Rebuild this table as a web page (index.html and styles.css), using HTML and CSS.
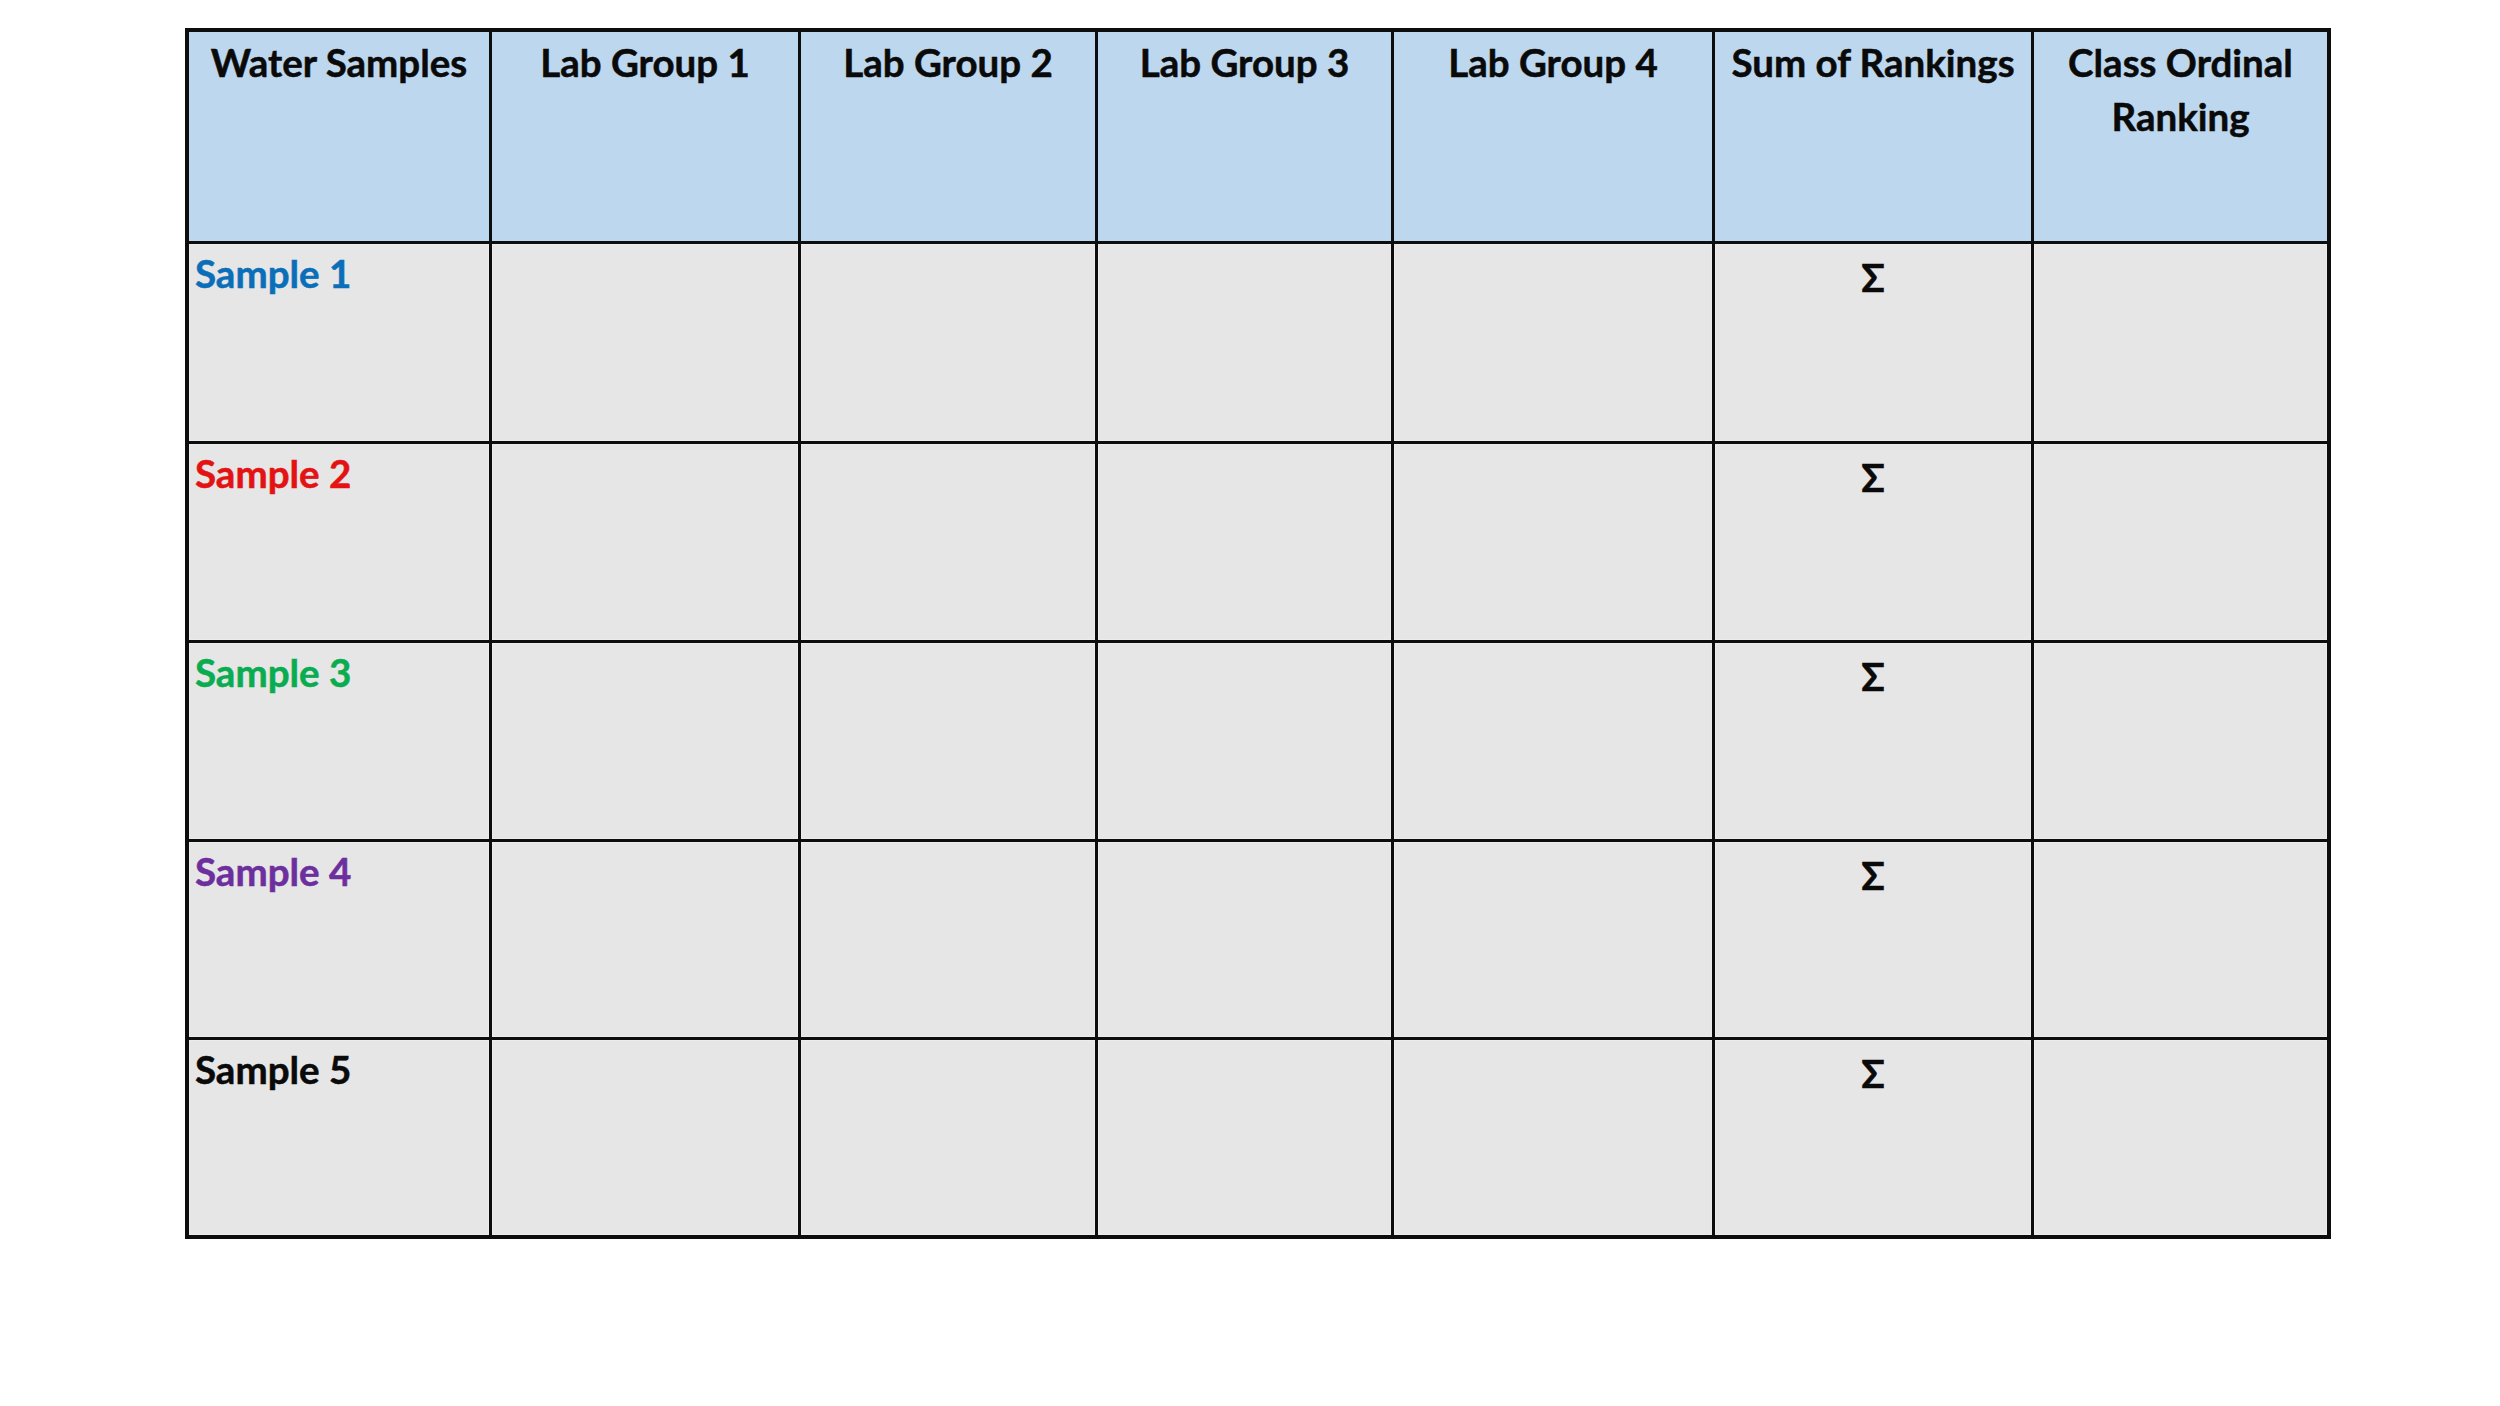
FILE: index.html
```html
<!DOCTYPE html>
<html>
<head>
<meta charset="utf-8">
<link rel="stylesheet" href="styles.css">
</head>
<body>
<div class="sheet">
  <div class="grid">
    <div class="cell head">Water Samples</div>
    <div class="cell head">Lab Group 1</div>
    <div class="cell head">Lab Group 2</div>
    <div class="cell head">Lab Group 3</div>
    <div class="cell head">Lab Group 4</div>
    <div class="cell head">Sum of Rankings</div>
    <div class="cell head">Class Ordinal<br>Ranking</div>

    <div class="cell label s1">Sample 1</div>
    <div class="cell"></div><div class="cell"></div><div class="cell"></div><div class="cell"></div>
    <div class="cell sum">Σ</div><div class="cell"></div>

    <div class="cell label s2">Sample 2</div>
    <div class="cell"></div><div class="cell"></div><div class="cell"></div><div class="cell"></div>
    <div class="cell sum">Σ</div><div class="cell"></div>

    <div class="cell label s3">Sample 3</div>
    <div class="cell"></div><div class="cell"></div><div class="cell"></div><div class="cell"></div>
    <div class="cell sum">Σ</div><div class="cell"></div>

    <div class="cell label s4">Sample 4</div>
    <div class="cell"></div><div class="cell"></div><div class="cell"></div><div class="cell"></div>
    <div class="cell sum">Σ</div><div class="cell"></div>

    <div class="cell label s5">Sample 5</div>
    <div class="cell"></div><div class="cell"></div><div class="cell"></div><div class="cell"></div>
    <div class="cell sum">Σ</div><div class="cell"></div>
  </div>
</div>
</body>
</html>
```

FILE: styles.css
```css
html, body {
  margin: 0;
  padding: 0;
  background: #ffffff;
}
.sheet {
  padding: 28px 0 0 185px;
}
.grid {
  display: inline-grid;
  grid-template-columns: 300px 306px 294px 293px 318px 316px 293px;
  grid-template-rows: 209px 197px 196px 196px 195px 195px;
  gap: 3px;
  background: #0d0d0d;
  border: 4px solid #0d0d0d;
  font-family: "Lato", "Open Sans", sans-serif;
  font-weight: 700;
  font-size: 38.5px;
  color: #0a0a0a;
  -webkit-text-stroke: 0.5px currentColor;
}
.cell {
  background: #e6e6e6;
  box-shadow: inset 0 0 0 1px #ececec;
}
.head {
  background: #bdd7ee;
  box-shadow: none;
  text-align: center;
  line-height: 54px;
  padding-top: 3px;
}
.label {
  padding: 2px 0 0 6px;
  line-height: 54px;
}
.sum {
  text-align: center;
  line-height: 54px;
  padding-top: 6px;
}
.s1 { color: #0a6fb8; }
.s2 { color: #e31313; }
.s3 { color: #0aac50; }
.s4 { color: #6e2f9e; }
.s5 { color: #0a0a0a; }
```
